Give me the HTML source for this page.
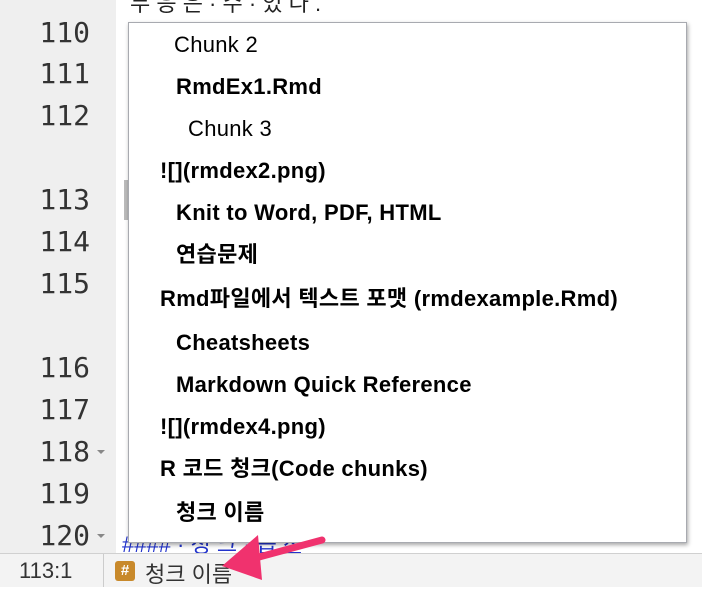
<!DOCTYPE html>
<html><head><meta charset="utf-8"><style>
body{margin:0;width:702px;height:586px;overflow:hidden;background:#fff;position:relative;font-family:"Liberation Sans","Noto Sans CJK KR",sans-serif}
#gut{position:absolute;left:0;top:0;width:116px;height:553px;background:#efefef}
.ln{position:absolute;right:612px;font-family:"DejaVu Sans Mono","Liberation Mono",monospace;font-size:28px;color:#333;line-height:30px}
.fold{position:absolute;left:97px;width:0;height:0;border-left:4px solid transparent;border-right:4px solid transparent;border-top:4px solid #888}
#pop{position:absolute;left:128px;top:22px;width:557px;height:519px;background:#fff;border:1px solid #a8aab0;box-shadow:1px 2px 4px rgba(0,0,0,.35)}
.it{position:absolute;font-size:22px;font-weight:bold;color:#000;line-height:24px;white-space:nowrap;letter-spacing:0.3px}
.n{font-weight:normal}
#status{position:absolute;left:0;top:553px;width:702px;height:33px;background:#f3f3f3;border-top:1px solid #d0d0d0}
</style></head><body>
<div style="position:absolute;left:130px;top:-14px;font-size:22px;color:#222">무 응 은 · 수 · 있 다 .</div>
<div id="gut"></div>
<div class="ln" style="top:18px">110</div>
<div class="ln" style="top:59px">111</div>
<div class="ln" style="top:101px">112</div>
<div class="ln" style="top:185px">113</div>
<div class="ln" style="top:227px">114</div>
<div class="ln" style="top:269px">115</div>
<div class="ln" style="top:353px">116</div>
<div class="ln" style="top:395px">117</div>
<div class="ln" style="top:437px">118</div>
<div class="ln" style="top:479px">119</div>
<div class="ln" style="top:521px">120</div>
<div class="fold" style="top:450px"></div>
<div class="fold" style="top:534px"></div>
<div style="position:absolute;left:124px;top:180px;width:5px;height:40px;background:#bbb"></div>
<div style="position:absolute;left:122px;top:527px;font-size:22px;color:#2233cc">#### · 청 크 · 옵 션</div>
<div id="pop">
<div class="it n" style="left:45px;top:10px">Chunk 2</div>
<div class="it" style="left:47px;top:52px">RmdEx1.Rmd</div>
<div class="it n" style="left:59px;top:94px">Chunk 3</div>
<div class="it" style="left:31px;top:136px">![](rmdex2.png)</div>
<div class="it" style="left:47px;top:178px">Knit to Word, PDF, HTML</div>
<div class="it" style="left:47px;top:220px">연습문제</div>
<div class="it" style="left:31px;top:264px">Rmd파일에서 텍스트 포맷 (rmdexample.Rmd)</div>
<div class="it" style="left:47px;top:308px">Cheatsheets</div>
<div class="it" style="left:47px;top:350px">Markdown Quick Reference</div>
<div class="it" style="left:31px;top:392px">![](rmdex4.png)</div>
<div class="it" style="left:31px;top:434px">R 코드 청크(Code chunks)</div>
<div class="it" style="left:47px;top:478px">청크 이름</div>
</div>
<div id="status">
<div style="position:absolute;left:19px;top:4px;font-size:22px;color:#333">113:1</div>
<div style="position:absolute;left:103px;top:0;width:1px;height:33px;background:#ccc"></div>
<div style="position:absolute;left:115px;top:7px;width:20px;height:20px;background:#c8892b;border-radius:3px;color:#fff;font-size:15px;font-weight:bold;text-align:center;line-height:20px">#</div>
<div style="position:absolute;left:145px;top:3px;font-size:22px;color:#333">청크 이름</div>
</div>
<svg style="position:absolute;left:0;top:0" width="702" height="586">
<path d="M322 540 L248 560" stroke="#f0326e" stroke-width="7" stroke-linecap="round" fill="none"/>
<path d="M222 566 L258 535 L262 580 Z" fill="#f0326e"/>
</svg>
</body></html>
